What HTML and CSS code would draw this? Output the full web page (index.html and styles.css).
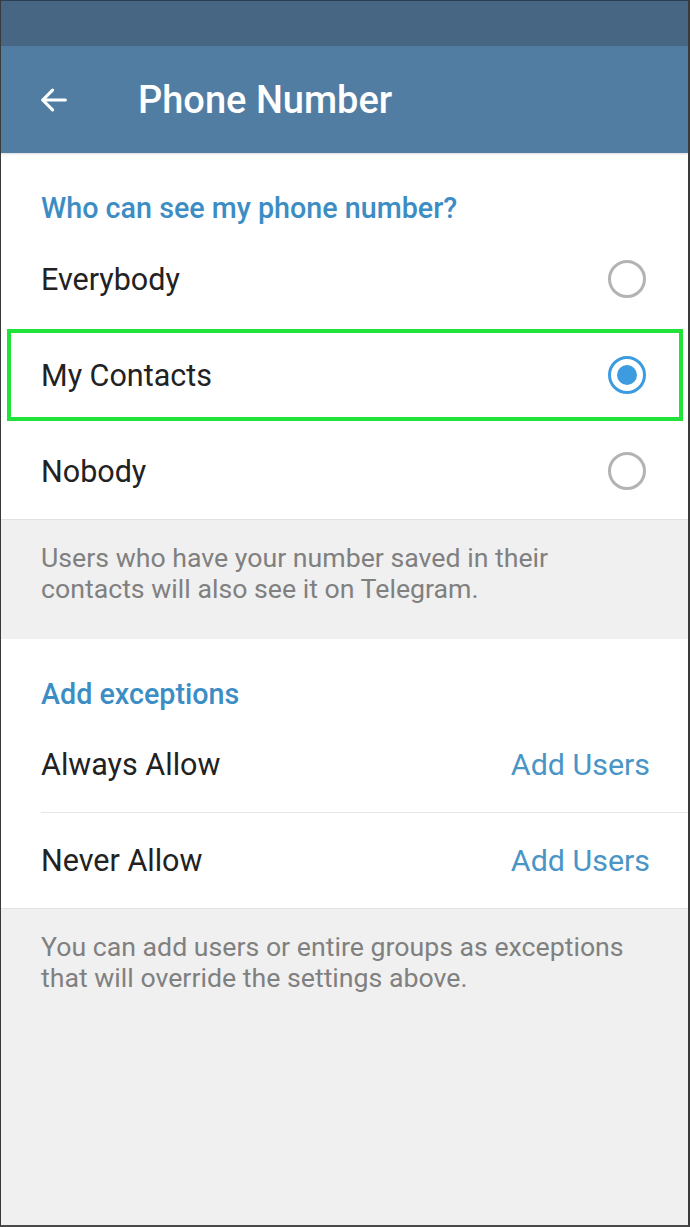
FILE: index.html
```html
<!DOCTYPE html>
<html lang="en">
<head>
    <meta charset="UTF-8">
    <meta name="viewport" content="width=device-width, initial-scale=1.0">
    <title>Phone Number</title>
    <link rel="stylesheet" href="styles.css">
</head>
<body>
    <div class="screen">
        <div class="status-bar"></div>
        <header class="toolbar">
            <span class="back">
                <svg width="34" height="34" viewBox="0 0 24 24"><path d="M20 12H4M11 5l-7 7 7 7" fill="none" stroke="#fff" stroke-width="2.2" stroke-linecap="round" stroke-linejoin="round"/></svg>
            </span>
            <h1 class="title">Phone Number</h1>
        </header>
        <main>
            <section class="card">
                <div class="card-title">Who can see my phone number?</div>
                <div class="row">
                    <span class="label">Everybody</span>
                    <span class="radio"></span>
                </div>
                <div class="row highlighted">
                    <span class="label">My Contacts</span>
                    <span class="radio checked"></span>
                </div>
                <div class="row">
                    <span class="label">Nobody</span>
                    <span class="radio"></span>
                </div>
            </section>
            <div class="hint">Users who have your number saved in their contacts will also see it on Telegram.</div>
            <section class="card exceptions">
                <div class="card-title">Add exceptions</div>
                <div class="row divided">
                    <span class="label">Always Allow</span>
                    <span class="value">Add Users</span>
                </div>
                <div class="row short">
                    <span class="label">Never Allow</span>
                    <span class="value">Add Users</span>
                </div>
            </section>
            <div class="hint last">You can add users or entire groups as exceptions that will override the settings above.</div>
        </main>
    </div>
</body>
</html>
```

FILE: styles.css
```css
html, body {
    margin: 0;
    height: 100%;
    font-family: 'Roboto', 'Liberation Sans', sans-serif;
    background-color: #f0f0f0;
}
.screen {
    display: flex;
    flex-direction: column;
    height: 1227px;
    box-sizing: border-box;
    border-left: 1px solid #3a3a3a;
    border-right: 2px solid #3a3a3a;
    border-bottom: 2px solid #4a4a4a;
    border-top: 1px solid #2c3e50;
    background-color: #f0f0f0;
    overflow: hidden;
}
.status-bar {
    height: 45px;
    background-color: #466683;
}
.toolbar {
    display: flex;
    align-items: center;
    height: 107px;
    background-color: #527da3;
    box-shadow: 0 1px 2px rgba(0,0,0,0.15);
    position: relative;
    z-index: 1;
}
.back {
    display: flex;
    width: 34px;
    height: 34px;
    margin-left: 36px;
}
.title {
    margin: 0 0 0 67px;
    color: #fff;
    font-size: 38px;
    font-weight: 500;
}
.card {
    background-color: #fff;
    display: flex;
    flex-direction: column;
}
.card-title {
    padding: 40px 41px 8px 40px;
    line-height: 30px;
    font-size: 28.7px;
    font-weight: 500;
    color: #3d8dc5;
}
.row {
    display: flex;
    align-items: center;
    justify-content: space-between;
    height: 96px;
    margin-left: 40px;
    padding-right: 41px;
    position: relative;
}
.label {
    font-size: 30.5px;
    color: #222;
}
.value {
    font-size: 30.4px;
    color: #4a95c6;
    margin-right: -3px;
}
.divided {
    height: 95px;
    border-bottom: 1px solid #e6e6e6;
}
.row.short {
    height: 95px;
}
.highlighted::before {
    content: "";
    position: absolute;
    left: -34px;
    right: 5px;
    top: 2px;
    bottom: 2px;
    border: 4px solid #1fe33a;
}
.radio {
    width: 32px;
    height: 32px;
    border: 3px solid #b3b3b3;
    border-radius: 50%;
    margin-right: 1px;
    display: flex;
    align-items: center;
    justify-content: center;
}
.radio.checked {
    border-color: #3d9be0;
}
.radio.checked::after {
    content: "";
    width: 20px;
    height: 20px;
    border-radius: 50%;
    background-color: #3d9be0;
}
.hint {
    padding: 23px 40px 34px 40px;
    font-size: 26.7px;
    line-height: 31px;
    color: #808080;
    border-top: 1px solid #e2e2e2;
}
.hint.last {
    padding-top: 23px;
}
```
